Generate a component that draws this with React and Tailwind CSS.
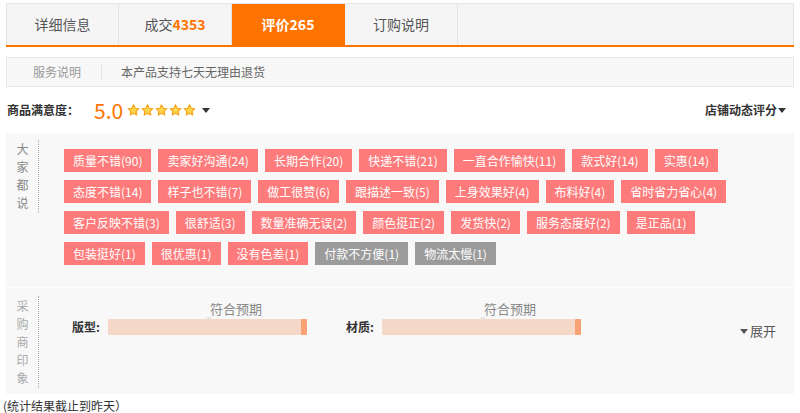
import React from 'react';

const FONT = { fontFamily: '"Microsoft YaHei", "Noto Sans CJK SC", "Noto Sans", sans-serif' };

const tabs = [
  { label: '详细信息' },
  { label: '成交', num: '4353' },
  { label: '评价', num: '265', active: true },
  { label: '订购说明' },
];

const tagRows = [
  ['质量不错(90)', '卖家好沟通(24)', '长期合作(20)', '快递不错(21)', '一直合作愉快(11)', '款式好(14)', '实惠(14)'],
  ['态度不错(14)', '样子也不错(7)', '做工很赞(6)', '跟描述一致(5)', '上身效果好(4)', '布料好(4)', '省时省力省心(4)'],
  ['客户反映不错(3)', '很舒适(3)', '数量准确无误(2)', '颜色挺正(2)', '发货快(2)', '服务态度好(2)', '是正品(1)'],
  ['包装挺好(1)', '很优惠(1)', '没有色差(1)', { t: '付款不方便(1)', bad: true }, { t: '物流太慢(1)', bad: true }],
];

function Star() {
  return (
    <svg width="13" height="12" viewBox="0 0 24 23" className="shrink-0">
      <path d="M12 1.5l3.1 6.6 7.2.9-5.3 5 1.4 7.1L12 17.6l-6.4 3.5L7 14l-5.3-5 7.2-.9z" fill="#ffd54a" stroke="#f7a21b" strokeWidth="2.2" strokeLinejoin="round" />
    </svg>
  );
}

function Caret({ className = '' }) {
  return <span className={`inline-block w-0 h-0 border-l-[4px] border-r-[4px] border-t-[5px] border-l-transparent border-r-transparent ${className}`} />;
}

function VLabel({ text, color }) {
  return (
    <div className={`w-[13px] flex flex-col items-center text-[12px] leading-[18px] ${color}`}>
      {text.split('').map((c, i) => <span key={i} className="block h-[18px]">{c}</span>)}
    </div>
  );
}

function Bar({ label }) {
  return (
    <div className="flex items-end">
      <span className="w-[36px] whitespace-nowrap text-[12px] font-bold text-[#333] leading-[16px]">{label}:</span>
      <div className="relative w-[199px]">
        <div className="absolute -top-[18px] left-[102px] text-[13px] leading-[16px] text-[#888] whitespace-nowrap">符合预期</div>
        <div className="absolute -top-[2px] left-[98px] w-0 h-0 border-l-[3px] border-r-[3px] border-t-[3px] border-l-transparent border-r-transparent border-t-[#e4e4e4]" />
        <div className="h-[16px] bg-[#f6d8c8] flex justify-end rounded-[1px]">
          <div className="w-[6px] h-full bg-[#fba274] rounded-[1px]" />
        </div>
      </div>
    </div>
  );
}

export default function App() {
  return (
    <div className="w-[800px] h-[413px] bg-white overflow-hidden pt-[3px]" style={FONT}>
      {/* Tabs */}
      <div className="mx-[6px] flex h-[44px] bg-[#f5f5f5] border-t border-[#e6e6e6] border-b-2 border-b-[#ff7300]">
        {tabs.map((t, i) => (
          <div
            key={i}
            className={`w-[113px] flex items-center justify-center text-[14px] border-r border-[#e3e3e3] ${i === 0 ? 'border-l' : ''} ${t.active ? 'bg-[#ff7300] text-white font-bold border-r-[#ff7300]' : 'text-[#555]'}`}
          >
            {t.label}
            {t.num && <span className={`font-bold ${t.active ? 'text-white' : 'text-[#ff7300]'}`}>{t.num}</span>}
          </div>
        ))}
        <div className="flex-1 border-r border-[#e3e3e3]" />
      </div>

      {/* Service */}
      <div className="mx-[6px] mt-[10px] h-[30px] flex items-center bg-[#f7f7f7] border border-[#e8e8e8]">
        <span className="ml-[26px] text-[12px] text-[#999]">服务说明</span>
        <span className="ml-[20px] w-px h-[14px] bg-[#e2e2e2]" />
        <span className="ml-[19px] text-[12px] text-[#666]">本产品支持七天无理由退货</span>
      </div>

      {/* Satisfaction */}
      <div className="mx-[6px] mt-[11px] h-[24px] flex items-center">
        <span className="ml-[1px] text-[12px] font-bold text-[#333]">商品满意度：</span>
        <span className="ml-[15px] text-[21px] leading-none text-[#ff7300]">5.0</span>
        <span className="ml-[4px] flex gap-[1px]">
          {[0, 1, 2, 3, 4].map(i => <Star key={i} />)}
        </span>
        <Caret className="ml-[6px] border-t-[#333]" />
        <span className="ml-auto mr-[8px] flex items-center text-[12px] font-bold text-[#333]">
          店铺动态评分<Caret className="ml-[1px] border-t-[#333]" />
        </span>
      </div>

      {/* Panels */}
      <div className="mx-[6px] mt-[11px] bg-[#f8f8f8]">
        <div className="flex pt-[7px] pb-[22px]">
          <div className="ml-[10px] border-r border-dotted border-[#aaa] pr-[9px] self-start h-[73px]">
            <VLabel text="大家都说" color="text-[#888]" />
          </div>
          <div className="ml-[25px] pt-[9px] flex flex-col gap-[8px]">
            {tagRows.map((row, ri) => (
              <div key={ri} className="flex gap-[7px]">
                {row.map((tag, ti) => {
                  const t = typeof tag === 'string' ? tag : tag.t;
                  const bad = typeof tag !== 'string';
                  return (
                    <span key={ti} className={`h-[23px] px-[9px] flex items-center text-[12px] text-white whitespace-nowrap ${bad ? 'bg-[#9b9b9b]' : 'bg-[#fd7b7b]'}`}>
                      {t}
                    </span>
                  );
                })}
              </div>
            ))}
          </div>
        </div>
        <div className="h-px bg-white" />
        <div className="flex h-[106px] pt-[8px]">
          <div className="ml-[10px] pt-[1px] border-r border-dotted border-[#aaa] pr-[9px] self-start h-[92px]">
            <VLabel text="采购商印象" color="text-[#aaa]" />
          </div>
          <div className="ml-[33px] pt-[23px] flex items-start gap-[39px]">
            <Bar label="版型" />
            <Bar label="材质" />
          </div>
          <div className="ml-auto mr-[18px] pt-[27px] flex items-start">
            <span className="flex items-center text-[13px] leading-[16px] text-[#555]">
              <Caret className="mr-[2px] border-t-[#555]" />展开
            </span>
          </div>
        </div>
      </div>

      <div className="mt-[3px] ml-[3px] text-[12px] text-[#333]">(统计结果截止到昨天）</div>
    </div>
  );
}
